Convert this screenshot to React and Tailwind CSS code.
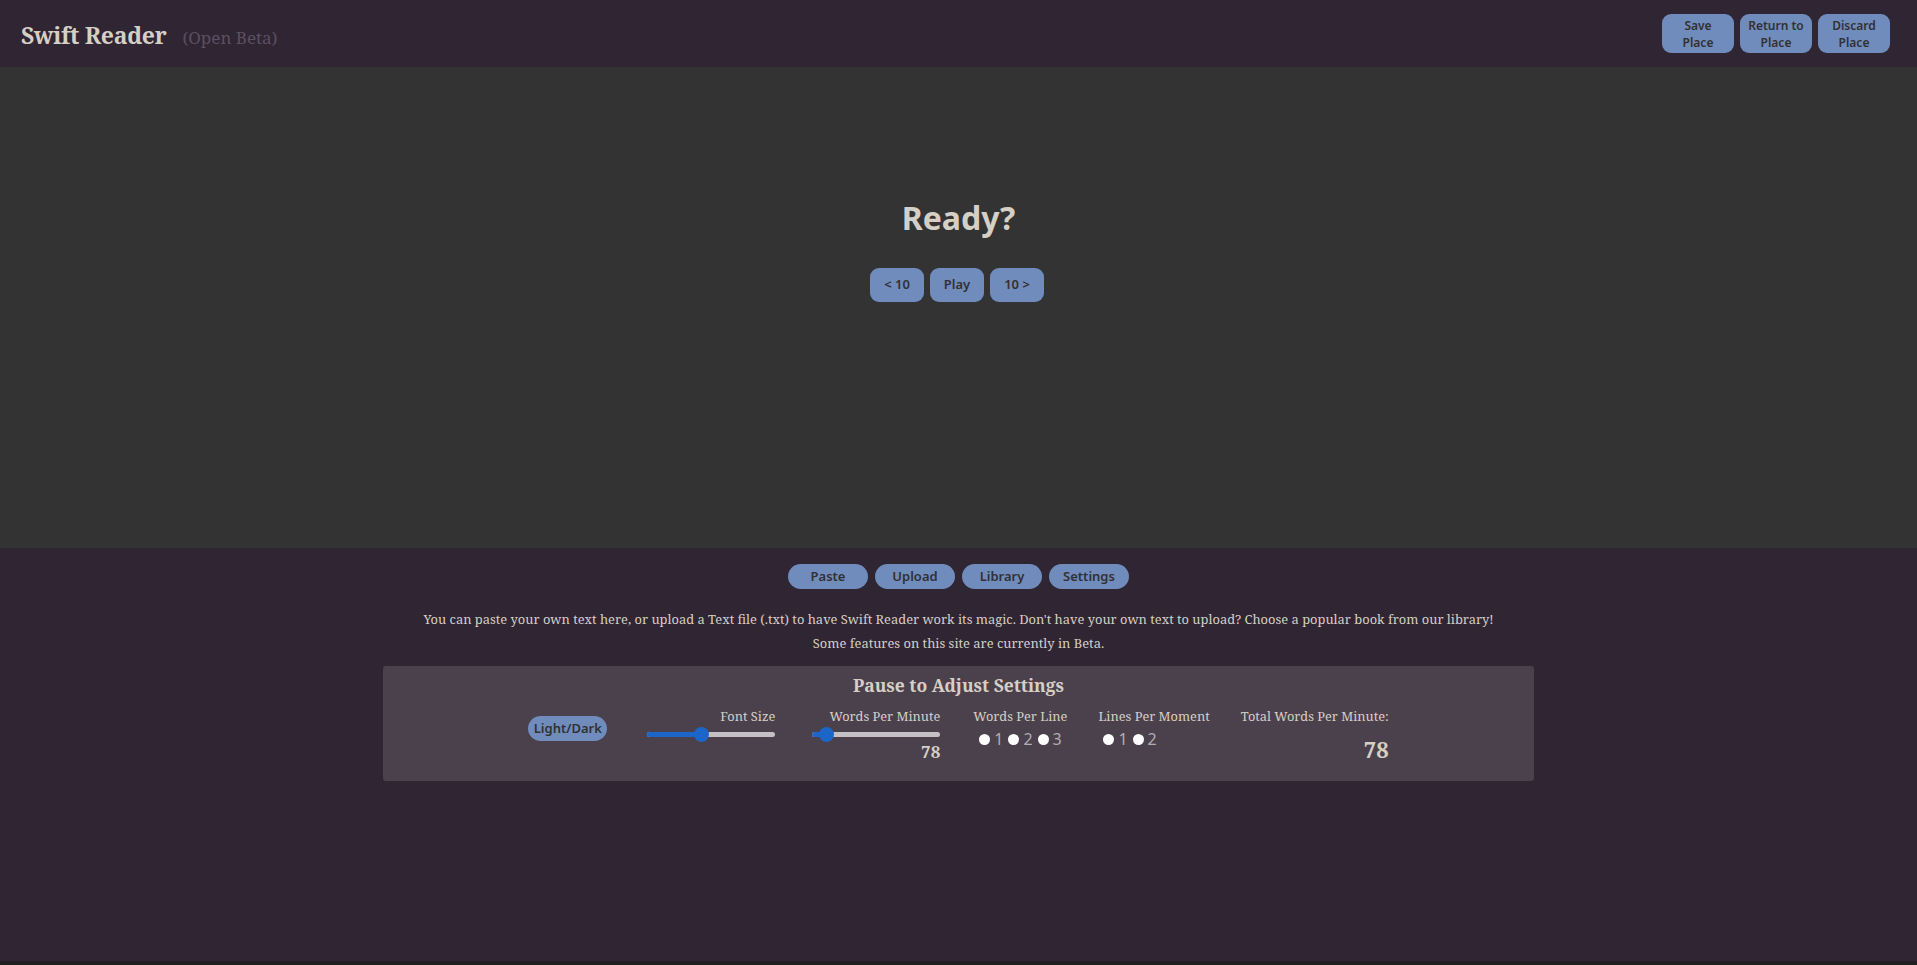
import React from 'react';

const serif = { fontFamily: '"Noto Serif", "DejaVu Serif", serif' };
const sans = { fontFamily: '"Noto Sans", "Open Sans", sans-serif' };

function HeaderButton({ children }) {
  return (
    <button className="w-[72px] h-[39px] rounded-[9px] bg-[#6f8cbd] text-[#333033] text-[12px] leading-[17px] font-semibold">
      {children}
    </button>
  );
}

function Radio({ label }) {
  return (
    <span className="flex items-center mr-[5px] last:mr-0">
      <span className="w-[11px] h-[11px] rounded-full bg-white mr-[4px]" />
      <span className="text-[16px] leading-[20px] text-[#b3acb0]">{label}</span>
    </span>
  );
}

function Slider({ value }) {
  return (
    <div className="relative w-[128px] h-[16px] flex items-center">
      <div className="w-full h-[5px] rounded-full bg-[#c4c0c4]" />
      <div className="absolute left-0 h-[5px] rounded-full bg-[#1d66c9]" style={{ width: `${value}%` }} />
      <div
        className="absolute w-[15px] h-[15px] rounded-full bg-[#1d66c9]"
        style={{ left: `calc(${value}% - 7px)` }}
      />
    </div>
  );
}

export default function App() {
  return (
    <div className="h-[965px] flex flex-col bg-[#2f2533] text-[#d6cfc5]" style={sans}>
      <header className="h-[67px] shrink-0 flex items-start justify-between pl-[21px] pr-[27px]">
        <div className="flex items-baseline pt-[18px]" style={serif}>
          <h1 className="text-[23px] font-bold text-[#d6cfc5] tracking-[-0.3px]">Swift Reader</h1>
          <span className="ml-[16px] text-[17px] text-[#5d4f60]">(Open Beta)</span>
        </div>
        <div className="flex gap-[6px] pt-[14px]">
          <HeaderButton>Save<br />Place</HeaderButton>
          <HeaderButton>Return to<br />Place</HeaderButton>
          <HeaderButton>Discard<br />Place</HeaderButton>
        </div>
      </header>

      <main className="h-[481px] shrink-0 bg-[#333333] flex flex-col items-center pt-[128px]">
        <h2 className="text-[32px] font-bold leading-[46px] text-[#d6cfc5]">Ready?</h2>
        <div className="flex gap-[6px] mt-[27px] mr-[3px]">
          <button className="w-[54px] h-[34px] rounded-[9px] bg-[#6f8cbd] text-[#333033] text-[13px] font-semibold">&lt; 10</button>
          <button className="w-[54px] h-[34px] rounded-[9px] bg-[#6f8cbd] text-[#333033] text-[13px] font-semibold">Play</button>
          <button className="w-[54px] h-[34px] rounded-[9px] bg-[#6f8cbd] text-[#333033] text-[13px] font-semibold">10 &gt;</button>
        </div>
      </main>

      <section className="flex-1 flex flex-col items-center pt-[16px]">
        <div className="flex gap-[7px]">
          {['Paste', 'Upload', 'Library', 'Settings'].map((t) => (
            <button key={t} className="w-[80px] h-[25px] rounded-full bg-[#6f8cbd] text-[#333033] text-[13px] font-semibold">
              {t}
            </button>
          ))}
        </div>
        <div className="mt-[18px] text-center text-[12.9px] leading-[24px] text-[#d6cfc5]" style={serif}>
          <p>You can paste your own text here, or upload a Text file (.txt) to have Swift Reader work its magic. Don't have your own text to upload? Choose a popular book from our library!</p>
          <p>Some features on this site are currently in Beta.</p>
        </div>
        <div className="mt-[11px] w-[1151px] h-[115px] rounded-[3px] bg-[#4b414d] flex flex-col">
          <h3 className="text-center text-[17.5px] font-bold leading-[28px] pt-[5px] text-[#d6cfc5]" style={serif}>Pause to Adjust Settings</h3>
          <div className="flex items-start justify-center mt-[7px]">
            <button className="mt-[10px] w-[79px] h-[25px] rounded-full bg-[#6f8cbd] text-[#333033] text-[13px] font-semibold">Light/Dark</button>
            <div className="ml-[40px] flex flex-col items-end" style={serif}>
              <span className="text-[12.8px] leading-[20px] text-[#d6cfc5]">Font Size</span>
              <Slider value={42} />
            </div>
            <div className="ml-[37px] flex flex-col items-end" style={serif}>
              <span className="text-[12.8px] leading-[20px] text-[#d6cfc5]">Words Per Minute</span>
              <Slider value={11} />
              <span className="text-[17px] font-bold leading-[20px] text-[#d6cfc5]">78</span>
            </div>
            <div className="ml-[33px] flex flex-col items-start" style={serif}>
              <span className="text-[12.8px] leading-[20px] text-[#d6cfc5]">Words Per Line</span>
              <div className="flex mt-[3px] pl-[6px]" style={sans}>
                <Radio label="1" />
                <Radio label="2" />
                <Radio label="3" />
              </div>
            </div>
            <div className="ml-[31px] flex flex-col items-start" style={serif}>
              <span className="text-[12.8px] leading-[20px] text-[#d6cfc5]">Lines Per Moment</span>
              <div className="flex mt-[3px] pl-[5px]" style={sans}>
                <Radio label="1" />
                <Radio label="2" />
              </div>
            </div>
            <div className="ml-[31px] flex flex-col items-end" style={serif}>
              <span className="text-[12.8px] leading-[20px] text-[#d6cfc5]">Total Words Per Minute:</span>
              <span className="mt-[9px] text-[22px] font-bold leading-[28px] text-[#d6cfc5]">78</span>
            </div>
          </div>
        </div>
      </section>
      <div className="h-[4px] shrink-0 bg-[#1f1f1f]" />
    </div>
  );
}
